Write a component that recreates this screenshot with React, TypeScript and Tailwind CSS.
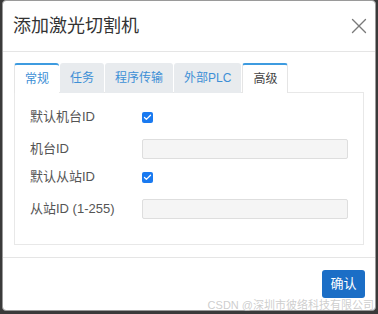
import { Check, X } from "lucide-react";

const tabs = ["常规", "任务", "程序传输", "外部PLC", "高级"];

function Checkbox() {
  return (
    <span className="flex h-[11px] w-[11px] items-center justify-center rounded-[2px] bg-[#1a7af0]">
      <Check size={9} strokeWidth={3.5} className="text-white" />
    </span>
  );
}

function Row({ label, children, className }: { label: string; children: React.ReactNode; className?: string }) {
  return (
    <div className={`flex h-[28px] items-center ${className ?? ""}`}>
      <span className="w-[112px] text-[13px] text-[#555]">{label}</span>
      {children}
    </div>
  );
}

function Field() {
  return <div className="h-[20px] w-[207px] rounded-[2px] border border-[#dedede] bg-[#f5f5f5]" />;
}

export default function App() {
  return (
    <div
      className="relative h-[314px] w-[378px] overflow-hidden bg-[#3a3a3a] pl-[2px]"
      style={{ fontFamily: '"Liberation Sans", "Noto Sans CJK SC", sans-serif' }}
    >
      <div className="flex h-[311px] w-[374px] flex-col rounded-[4px] border border-[#9a9a9a] bg-white">
        <div className="flex h-[51px] items-center justify-between border-b border-[#e5e5e5] pl-[10px] pr-[3px]">
          <h1 className="text-[18px] text-[#333]">添加激光切割机</h1>
          <X size={26} strokeWidth={1.25} className="text-[#7a7a7a]" />
        </div>

        <div className="px-[11px] pt-[11px]">
          <div className="flex gap-px">
            {tabs.map((t, i) => {
              const active = i === 4;
              const first = i === 0;
              return (
                <div
                  key={t}
                  className={`flex h-[30px] items-center rounded-t-[3px] px-[10px] text-[12px] ${
                    active
                      ? "border-x border-t-2 border-x-[#e5e5e5] border-t-[#3d9be0] bg-white text-[#444]"
                      : first
                        ? "border-l border-t-2 border-l-[#e5e5e5] border-t-[#3d9be0] bg-white text-[#3d8fd6]"
                        : "bg-[#e8ebee] text-[#3d8fd6]"
                  }`}
                >
                  {t}
                </div>
              );
            })}
          </div>
          <div className="-mt-px flex flex-col border border-[#e8e8e8] px-[15px] pb-[21px] pt-[10px]">
            <Row label="默认机台ID">
              <Checkbox />
            </Row>
            <Row label="机台ID" className="mt-[4px]">
              <Field />
            </Row>
            <Row label="默认从站ID">
              <Checkbox />
            </Row>
            <Row label="从站ID (1-255)" className="mt-[4px]">
              <Field />
            </Row>
          </div>
        </div>

        <div className="mt-[12px] flex flex-1 items-start justify-end border-t border-[#e5e5e5] pr-[10px] pt-[12px]">
          <button className="flex h-[28px] w-[43px] items-center justify-center rounded-[3px] bg-[#1b6ec6] text-[13px] text-white">
            确认
          </button>
        </div>
      </div>
      <span className="absolute bottom-[3px] right-[4px] text-[11px] leading-none text-[#c8c8c8]/90">
        CSDN @深圳市彼络科技有限公司
      </span>
    </div>
  );
}
